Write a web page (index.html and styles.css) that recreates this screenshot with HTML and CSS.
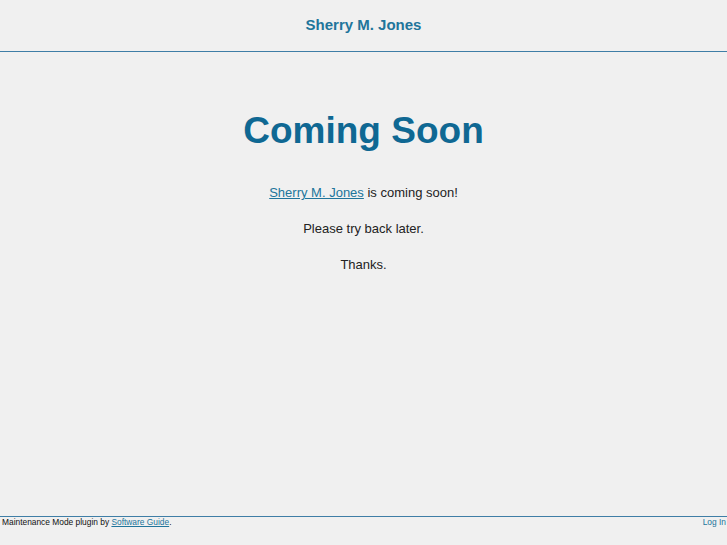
FILE: index.html
```html
<!DOCTYPE html>
<html>
<head>
<meta charset="utf-8">
<title>Sherry M. Jones</title>
<link rel="stylesheet" href="styles.css">
</head>
<body>
<div class="page">
  <header class="site-header">
    <span class="site-title">Sherry M. Jones</span>
  </header>
  <main class="content">
    <h1 class="headline">Coming Soon</h1>
    <p class="msg"><a href="#" class="link">Sherry M. Jones</a> is coming soon!</p>
    <p class="msg">Please try back later.</p>
    <p class="msg">Thanks.</p>
  </main>
  <footer class="site-footer">
    <span>Maintenance Mode plugin by <a href="#" class="link">Software Guide</a>.</span>
    <a href="#" class="login">Log In</a>
  </footer>
</div>
</body>
</html>
```
FILE: styles.css
```css
html, body {
  margin: 0;
  padding: 0;
  background: #f0f0f0;
  font-family: "Liberation Sans", Arial, sans-serif;
  color: #222;
}
.page {
  min-height: 100vh;
  display: flex;
  flex-direction: column;
}
.site-header {
  height: 51px;
  border-bottom: 1px solid #3f7ea6;
  display: flex;
  align-items: center;
  justify-content: center;
}
.site-title {
  font-size: 15px;
  font-weight: bold;
  color: #21759b;
  line-height: 18px;
  margin-top: -2px;
}
.content {
  flex: 1;
  text-align: center;
}
.headline {
  margin: 58px 0 33px;
  font-size: 37px;
  line-height: 42px;
  font-weight: bold;
  color: #0f6893;
}
.msg {
  margin: 0 0 20px;
  font-size: 13px;
  line-height: 16px;
}
.link {
  color: #21759b;
}
.site-footer {
  border-top: 1px solid #3f7ea6;
  height: 28px;
  display: flex;
  justify-content: space-between;
  align-items: flex-start;
  padding: 0 1px 0 2px;
  font-size: 8.4px;
  line-height: 10px;
  color: #111;
}
.login {
  color: #21759b;
  text-decoration: none;
}
```
